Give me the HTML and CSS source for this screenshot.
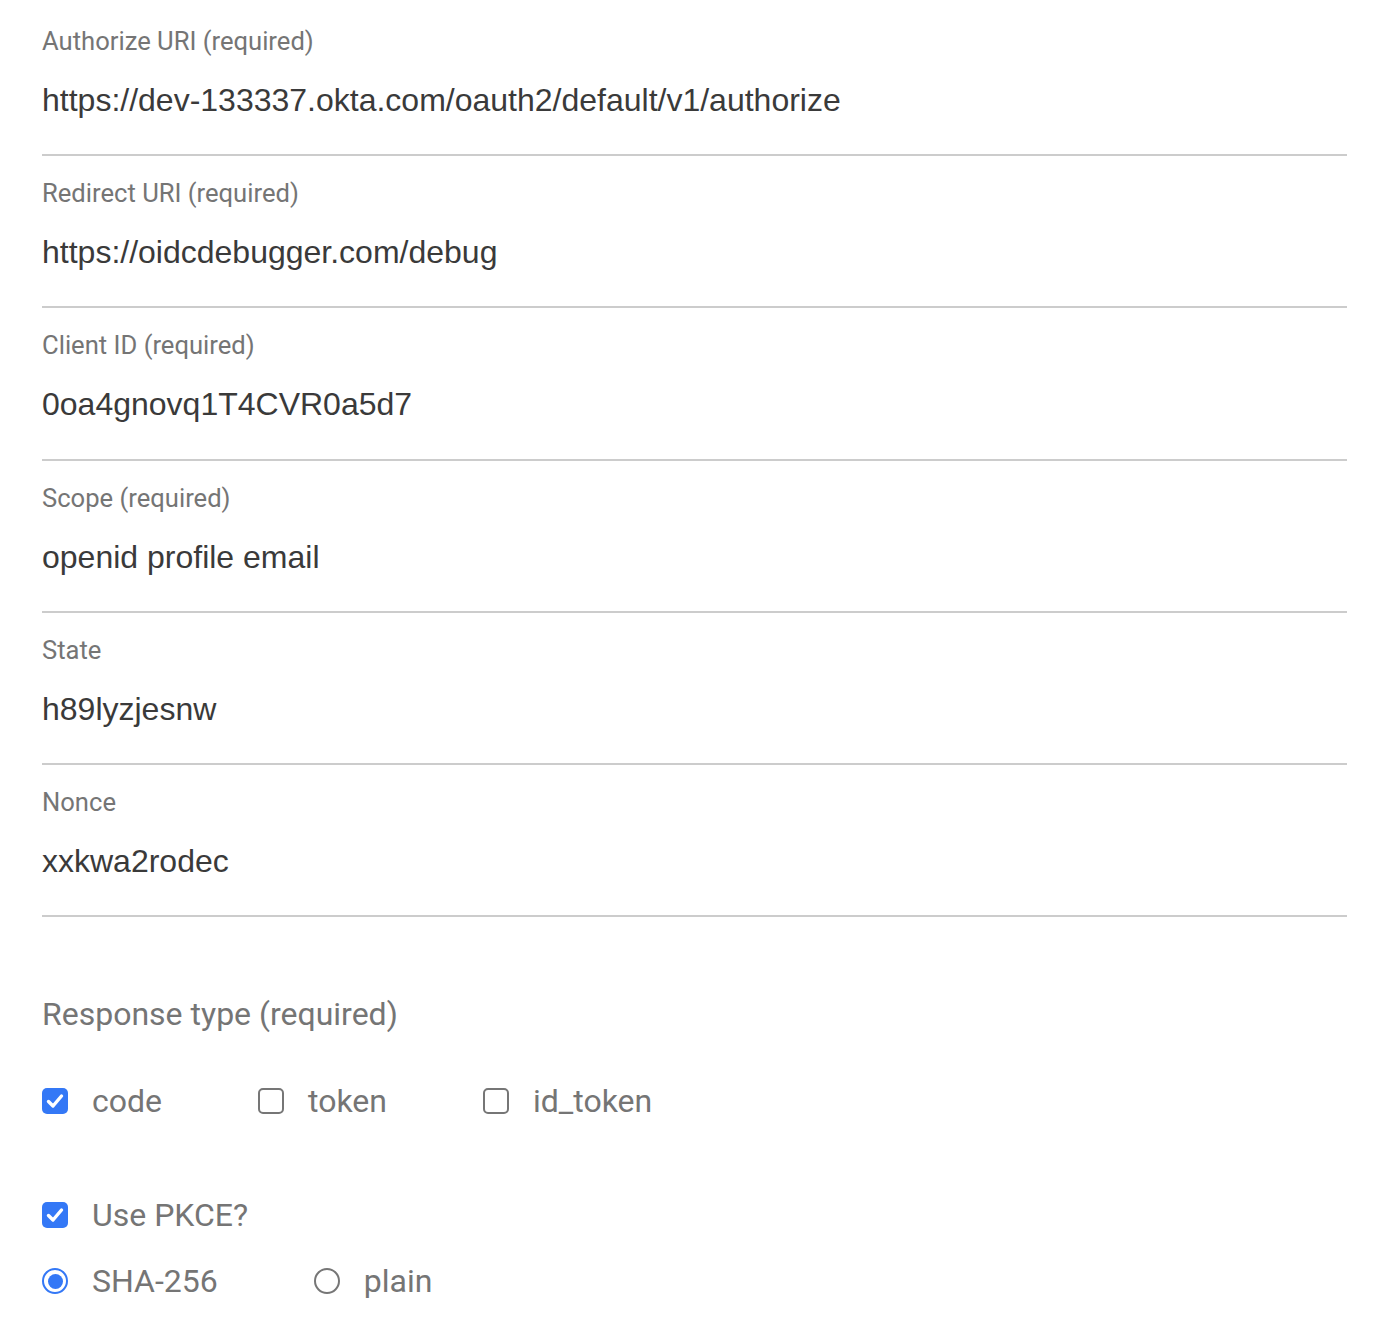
FILE: index.html
```html
<!DOCTYPE html>
<html lang="en">
<head>
<meta charset="utf-8">
<title>OIDC Debugger</title>
<link rel="stylesheet" href="styles.css">
</head>
<body>
<div class="form">
  <div class="field">
    <div class="label">Authorize URI (required)</div>
    <div class="value">https://dev-133337.okta.com/oauth2/default/v1/authorize</div>
  </div>
  <div class="field">
    <div class="label">Redirect URI (required)</div>
    <div class="value">https://oidcdebugger.com/debug</div>
  </div>
  <div class="field">
    <div class="label">Client ID (required)</div>
    <div class="value">0oa4gnovq1T4CVR0a5d7</div>
  </div>
  <div class="field">
    <div class="label">Scope (required)</div>
    <div class="value">openid profile email</div>
  </div>
  <div class="field">
    <div class="label">State</div>
    <div class="value">h89lyzjesnw</div>
  </div>
  <div class="field">
    <div class="label">Nonce</div>
    <div class="value">xxkwa2rodec</div>
  </div>

  <div class="section-title">Response type (required)</div>
  <div class="options options-response">
    <label class="option">
      <span class="box checked"><svg viewBox="0 0 26 26" width="26" height="26"><path d="M6.5 13.5 L11 18 L19.5 8" fill="none" stroke="#fff" stroke-width="3.4" stroke-linecap="round" stroke-linejoin="round"/></svg></span>
      <span class="opt-text">code</span>
    </label>
    <label class="option">
      <span class="box"></span>
      <span class="opt-text">token</span>
    </label>
    <label class="option">
      <span class="box"></span>
      <span class="opt-text">id_token</span>
    </label>
  </div>

  <div class="options options-pkce">
    <label class="option">
      <span class="box checked"><svg viewBox="0 0 26 26" width="26" height="26"><path d="M6.5 13.5 L11 18 L19.5 8" fill="none" stroke="#fff" stroke-width="3.4" stroke-linecap="round" stroke-linejoin="round"/></svg></span>
      <span class="opt-text">Use PKCE?</span>
    </label>
  </div>

  <div class="options options-method">
    <label class="option">
      <span class="radio checked"><span class="dot"></span></span>
      <span class="opt-text">SHA-256</span>
    </label>
    <label class="option">
      <span class="radio"></span>
      <span class="opt-text">plain</span>
    </label>
  </div>
</div>
</body>
</html>
```

FILE: styles.css
```css
html, body {
  margin: 0;
  padding: 0;
  background: #ffffff;
}

.form {
  width: 1305px;
  padding: 4px 0 0 42px;
}

.field {
  padding: 22px 0 34.2px 0;
  border-bottom: 2px solid #cccccc;
}

.label {
  font-family: Roboto, "Liberation Sans", sans-serif;
  font-size: 25.6px;
  line-height: 30px;
  color: #757575;
}

.value {
  margin-top: 24px;
  font-family: "Liberation Sans", Arial, sans-serif;
  font-size: 32px;
  line-height: 40px;
  color: #3a3a3a;
}

.section-title {
  margin-top: 77px;
  font-family: Roboto, "Liberation Sans", sans-serif;
  font-size: 32px;
  line-height: 40px;
  color: #757575;
}

.options {
  display: flex;
  align-items: center;
  gap: 96px;
}

.options-response {
  margin-top: 47px;
}

.options-pkce {
  margin-top: 74px;
}

.options-method {
  margin-top: 26px;
}

.option {
  display: flex;
  align-items: center;
  gap: 24px;
}

.opt-text {
  font-family: Roboto, "Liberation Sans", sans-serif;
  font-size: 32px;
  line-height: 40px;
  color: #757575;
}

.box {
  box-sizing: border-box;
  width: 26px;
  height: 26px;
  border: 2px solid #767676;
  border-radius: 5px;
  display: flex;
  align-items: center;
  justify-content: center;
}

.box.checked {
  border: none;
  background: #3478f6;
}

.box svg {
  display: block;
}

.radio {
  box-sizing: border-box;
  width: 26px;
  height: 26px;
  border: 2px solid #767676;
  border-radius: 50%;
  display: flex;
  align-items: center;
  justify-content: center;
}

.radio.checked {
  border: 2.5px solid #3478f6;
}

.radio .dot {
  width: 15px;
  height: 15px;
  border-radius: 50%;
  background: #3478f6;
}
```
